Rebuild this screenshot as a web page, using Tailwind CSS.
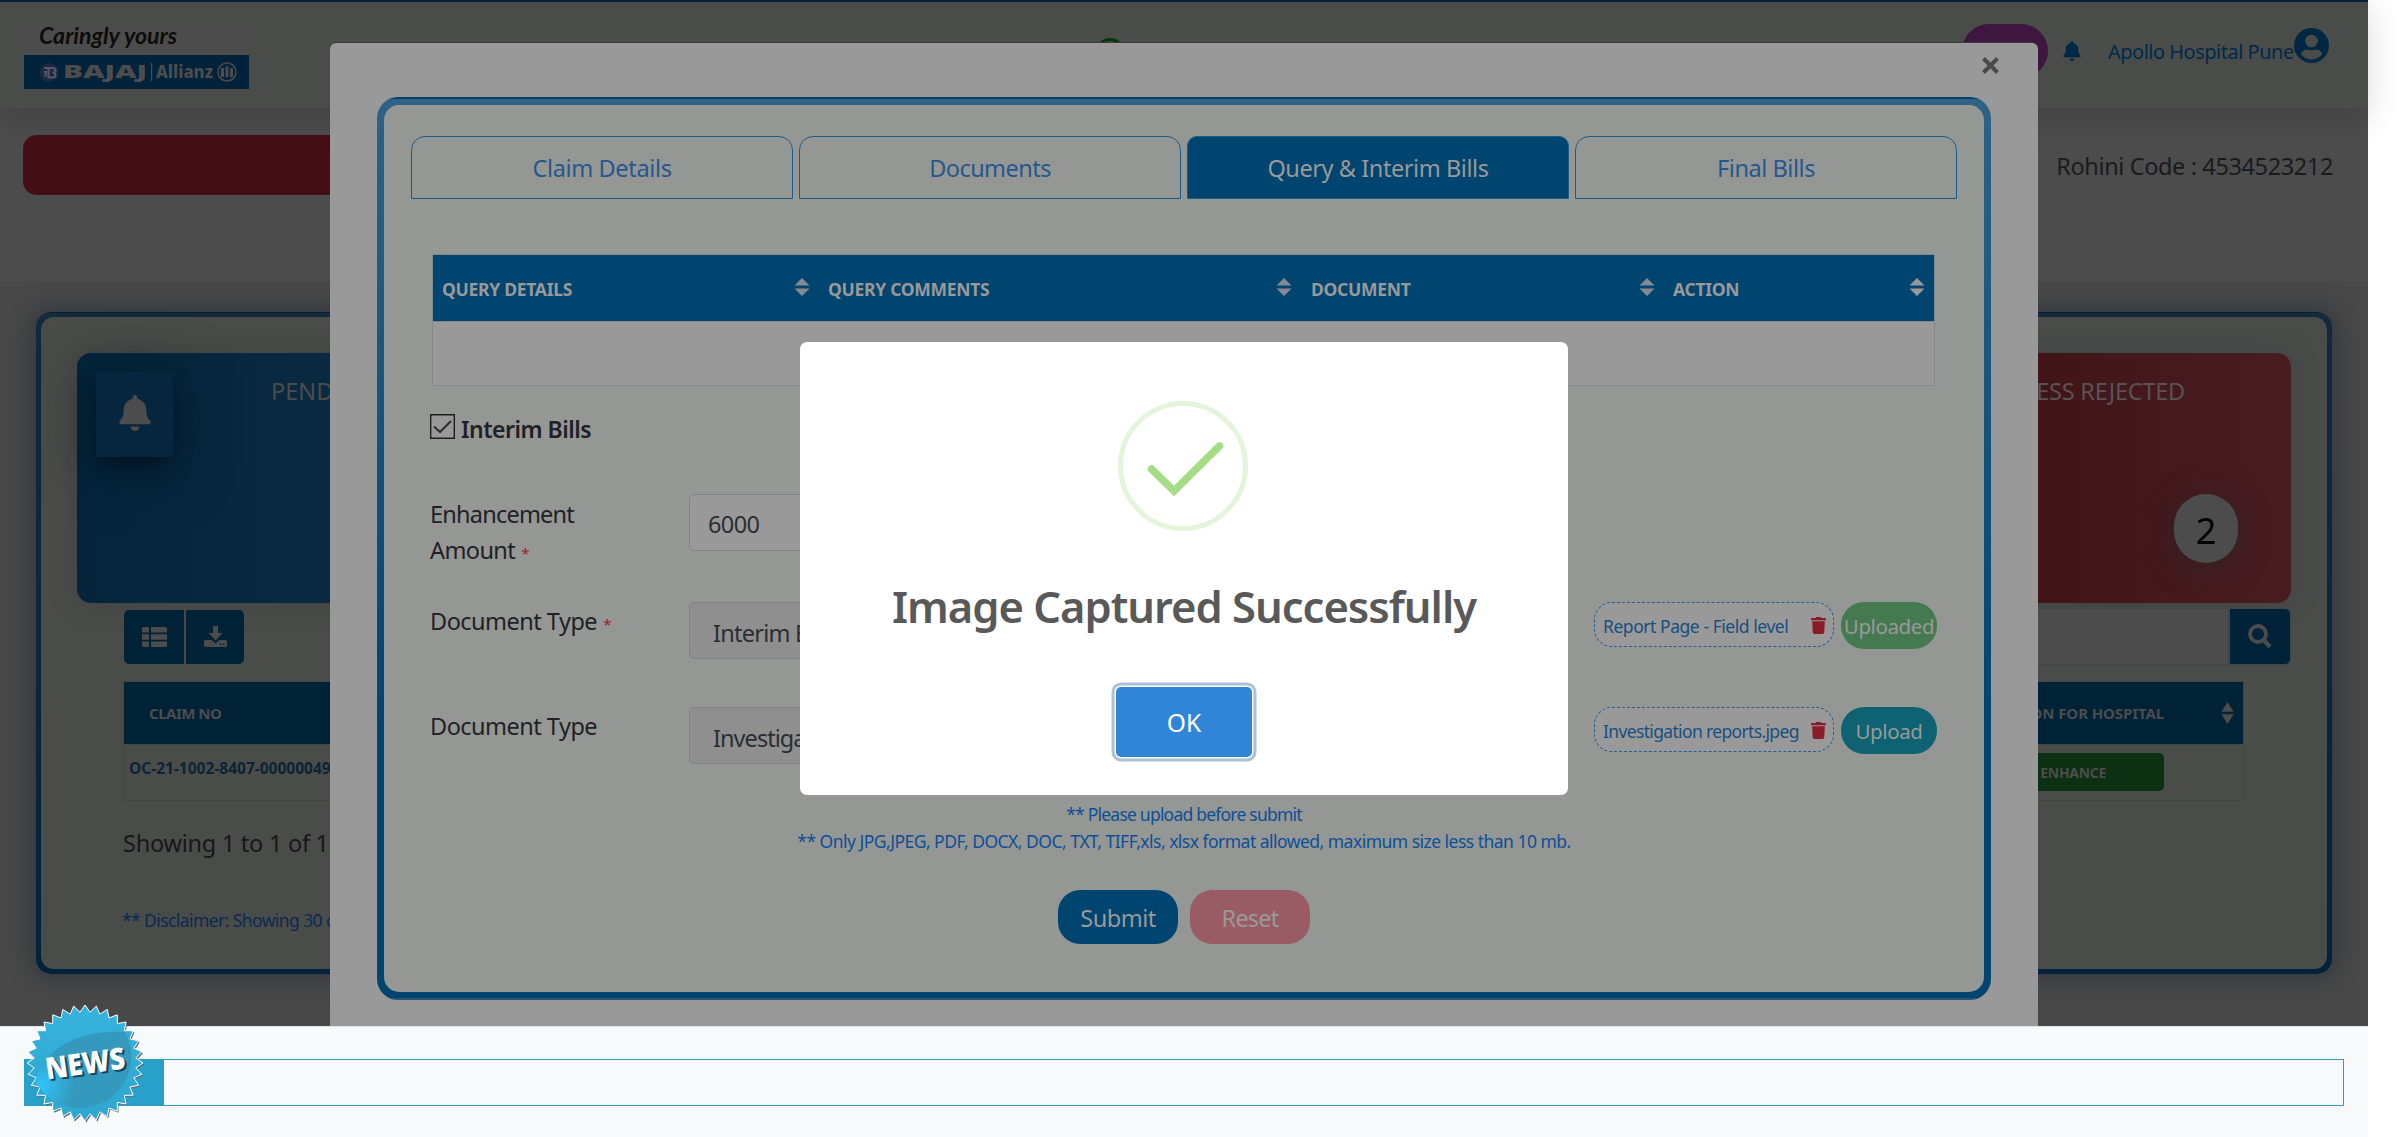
<!DOCTYPE html>
<html lang="en">
<head>
<meta charset="utf-8">
<title>Hospital Claims</title>
<script src="https://cdn.jsdelivr.net/npm/@tailwindcss/browser@4"></script>
</head>
<body class="relative h-[1137px] w-[2400px] overflow-hidden bg-white font-['Noto_Sans','Open_Sans',sans-serif] text-[23.5px] leading-[36px] whitespace-nowrap">

<svg class="hidden">
  <symbol id="bell" viewBox="0 0 448 512"><path d="M224 512c35.32 0 63.97-28.65 63.97-64H160.03c0 35.35 28.65 64 63.97 64zm215.39-149.71c-19.32-20.76-55.47-51.99-55.47-154.29 0-77.7-54.48-139.9-127.94-155.16V32c0-17.67-14.32-32-31.98-32s-31.98 14.33-31.98 32v20.84C118.56 68.1 64.08 130.3 64.08 208c0 102.3-36.15 133.53-55.47 154.29-6 6.45-8.66 14.16-8.61 21.71.11 16.4 12.98 32 32.1 32h383.8c19.12 0 32-15.6 32.1-32 .05-7.55-2.61-15.27-8.61-21.71z"/></symbol>
  <symbol id="trash" viewBox="0 0 448 512"><path d="M432 32H312l-9.4-18.7A24 24 0 0 0 281.100 0H166.800a23.720 23.720 0 0 0-21.400 13.300L136 32H16A16 16 0 0 0 0 48v32a16 16 0 0 0 16 16h416a16 16 0 0 0 16-16V48a16 16 0 0 0-16-16zM32 128L53.200 467a48 48 0 0 0 47.900 45h245.800a48 48 0 0 0 47.900-45L416 128z"/></symbol>
  <symbol id="sort" viewBox="0 0 16 18"><path d="M8 0L15.500 7.500H.5zM8 18L15.500 10.500H.5z"/></symbol>
</svg>

<header class="relative z-10 flex h-[108px] w-[2368px] items-start border-t-2 border-[#00233b] bg-[#4a4c4a] shadow-[0_8px_32px_rgba(0,0,0,0.15)]">
  <svg class="mt-5 ml-6 h-[67px] w-[225px] shrink-0" viewBox="0 0 225 67">
    <rect width="225" height="34" fill="#4c4c4c"/>
    <text x="15" y="22" font-family="Lato" font-style="italic" font-weight="700" font-size="22" fill="#0c0c0c" textLength="138" lengthAdjust="spacingAndGlyphs">Caringly yours</text>
    <rect y="33" width="225" height="34" fill="#00233b"/>
    <circle cx="25" cy="50.500" r="9.500" fill="#1c2748"/>
    <path d="M20 46h8.500q3 0 3 2.500t-3 2q3 0 3 2.500t-3 2.500h-4v-9M20 50h3M21.500 50v5" fill="none" stroke="#565a60" stroke-width="2"/>
    <text x="39" y="56" font-family="Open Sans" font-weight="800" font-size="17" fill="#4c4c4c" textLength="84" lengthAdjust="spacingAndGlyphs">BAJAJ</text>
    <rect x="127" y="41" width="1.200" height="18" fill="#4c4c4c"/>
    <text x="132" y="56" font-family="Noto Sans" font-weight="800" font-size="18" fill="#4c4c4c" textLength="57" lengthAdjust="spacingAndGlyphs">Allianz</text>
    <circle cx="203" cy="50" r="9" fill="none" stroke="#4c4c4c" stroke-width="1.500"/>
    <path d="M198.500 46v9M203 44.500v10.500M207.500 46v9" stroke="#4c4c4c" stroke-width="3"/>
  </svg>
  <svg class="mt-[36px] ml-[847px] size-7 shrink-0" viewBox="0 0 28 28"><circle cx="14" cy="14" r="12.500" fill="none" stroke="#003600" stroke-width="3"/></svg>
  <div class="mt-[22px] ml-[838px] h-[54px] w-[86px] shrink-0 rounded-[27px] bg-[#3e1640]"></div>
  <svg class="mt-[39px] ml-[15px] h-5 w-[18px] shrink-0 fill-[#002844]"><use href="#bell"/></svg>
  <span class="mt-[32px] ml-[27px] w-[186px] text-[20px] tracking-[-0.5px] text-[#002a4a]">Apollo Hospital Pune</span>
  <svg class="mt-[26px] size-[35px] shrink-0" viewBox="0 0 35 35"><circle cx="17.500" cy="17.500" r="17.500" fill="#002844"/><circle cx="17.500" cy="13" r="6.300" fill="#4a4c4a"/><path d="M6.700 26q2-4.500 6.200-4.500q4.600 1.600 9.200 0q4.200 0 6.200 4.500a13.500 13.500 0 0 1-21.600 0z" fill="#4a4c4a"/></svg>
</header>

<section class="flex h-[174px] w-[2368px] justify-between bg-[#4c4c4c] pt-[27px] pr-[35px] pl-[23px]">
  <div class="h-[60px] w-[1900px] rounded-[14px] bg-[#430f14]"></div>
  <div class="mt-[13px] tracking-[-0.38px] text-[#191b20]">Rohini Code : 4534523212</div>
</section>

<section class="h-[744px] w-[2368px] bg-[#484848] px-9 pt-[30px]">
  <div class="h-[662px] rounded-[15px] bg-[linear-gradient(to_bottom,#00233b_1px,#14293a_1px,#00233b)] p-[5px] shadow-[0_0_22px_4px_rgba(45,50,62,0.75)]">
    <div class="h-full rounded-[13px] bg-[#4a4c4a] px-9 pt-9">
      <div class="flex h-[250px] justify-between">
        <div class="flex w-[600px] rounded-[14px] bg-[linear-gradient(to_right,#03243b,#0a2b41_300px)] pt-[19px] pl-[19px] shadow-[0_0_24px_rgba(60,60,60,0.6)]">
          <div class="flex h-[85px] w-[77px] items-center justify-center bg-[#05263e] shadow-[0_12px_22px_-6px_rgba(0,10,20,0.7),0_6px_60px_rgba(0,20,30,0.5)]"><svg class="-mt-1 h-9 w-8 fill-[#4c4c4c]"><use href="#bell"/></svg></div>
          <div class="mt-px ml-[98px] text-[#4c4c4c]">PENDING CLAIMS</div>
        </div>
        <div class="flex w-[600px] flex-col items-end rounded-[14px] bg-[linear-gradient(to_right,#411518_350px,#481d22)] pt-[20px] pr-[53px] shadow-[0_0_24px_rgba(60,64,66,0.8)]">
          <div class="pr-[53px] tracking-[-0.25px] text-[#595353]">CASHLESS REJECTED</div>
          <div class="mt-[85px] flex h-[69px] w-[64px] items-center justify-center rounded-[34px] bg-[#4c4c4c] pt-1 text-[36px] text-black shadow-[0_4px_30px_rgba(45,35,38,0.9)]">2</div>
        </div>
      </div>
      <div class="mt-[5px] flex justify-between">
        <div class="mt-[2px] ml-[47px] flex gap-[2px]">
          <div class="flex h-[54px] w-[60px] items-center justify-center rounded-l-[5px] bg-[#002237]"><svg class="h-5 w-[25px] fill-[#4c4c4c]" viewBox="0 0 25 20"><path d="M1 0h6v5.500H0V1zM9 0h15l1 1v4.500H9zM0 7.200h7v5.500H0zM9 7.200h16v5.500H9zM0 14.400h7V20H1l-1-1zM9 14.400h16V19l-1 1H9z"/></svg></div>
          <div class="flex h-[54px] w-[58px] items-center justify-center rounded-r-[5px] bg-[#002237]"><svg class="-mt-0.5 h-[21px] w-[23px] fill-[#4c4c4c]" viewBox="0 0 23 21"><path d="M9 0h5v7h4.500l-7 7.500L4.500 7H9zM1 14h6.500l4 3.500 4-3.500H22l1 1v5l-1 1H1l-1-1v-5z"/><path d="M16 17.500h1.500V19H16zM19 17.500h1.500V19H19z" fill="#002237"/></svg></div>
        </div>
        <div class="flex h-[57px] w-[500px] rounded-[5px] border border-[#42464a] bg-[#4c4c4c]">
          <div class="grow border-r-2 border-[#42464a]"></div>
          <div class="flex w-[60px] items-center justify-center rounded-r-[5px] bg-[#002339]"><svg class="h-[25px] w-6" viewBox="0 0 24 25"><circle cx="10" cy="10" r="8" fill="none" stroke="#4c4c4c" stroke-width="3.800"/><path d="M15.500 16l6.500 6.800" stroke="#4c4c4c" stroke-width="4.500"/></svg></div>
        </div>
      </div>
      <div class="mt-[16px] ml-[46px] h-[120px] w-[2121px] border border-[#434545] text-[15px] font-bold text-[#4c4c4c]">
        <div class="flex h-[62px] items-center justify-between bg-[#002237] pr-[9px] pl-[25px]">
          <span class="tracking-[-0.5px]">CLAIM NO</span>
          <div class="flex items-center gap-[57px]"><div class="tracking-[-0.1px]">ACTION FOR HOSPITAL</div><svg class="h-[22px] w-[13px] fill-[#4c4c4c]" preserveAspectRatio="none" viewBox="0 0 16 18"><path d="M8 0L15.500 8H.5zM8 18L15.500 10H.5z"/></svg></div>
        </div>
        <div class="flex justify-between border-t border-[#434545] pt-[8px] pr-[79px] pl-[5px]">
          <div class="-mt-[3px] text-[15.5px] text-[#0a2436]">OC-21-1002-8407-00000049</div>
          <div class="h-[38px] w-[200px] rounded-[5px] bg-[#0b3012] pr-[58px] text-right text-[14px] leading-[39px] tracking-[-0.3px]">ENHANCE</div>
        </div>
      </div>
      <div class="mt-[24px] ml-[46px] tracking-[-0.25px] text-[#171717]">Showing 1 to 1 of 1</div>
      <div class="mt-[41px] ml-[45px] text-[17.5px] tracking-[-0.58px] text-[#0a2a52]">** Disclaimer: Showing 30 claims</div>
    </div>
  </div>
</section>

<footer class="h-[111px] w-[2368px] border-t border-[#dfe3e8] bg-[#f8f9fb] px-6 pt-8">
  <div class="h-[47px] border border-[#2ba0bf]"><div class="h-full w-[139px] bg-[#27a0ca]"></div></div>
</footer>
<svg class="absolute top-[1002px] left-[24px] h-[122px] w-[122px] overflow-visible" viewBox="-61 -61 122 122">
  <defs>
    <linearGradient id="seal" x1="0" y1="0" x2="0" y2="1"><stop offset="0" stop-color="#36b3dd"/><stop offset="1" stop-color="#2ea6cf"/></linearGradient>
    <radialGradient id="glow" gradientUnits="userSpaceOnUse" cx="-44" cy="22" r="34"><stop offset="0" stop-color="#2fc4fa"/><stop offset="1" stop-color="#3499bc"/></radialGradient>
  </defs>
  <polygon class="star" fill="#5d6b72" transform="translate(1.200 1.500)"/>
  <polygon class="star" fill="url(#seal)" stroke="#fff" stroke-width="1"/>
  <path d="M-50 18C-38-22 5-33 40-31A50.500 50.500 0 1 1-50 18z" fill="url(#glow)"/>
  <text transform="rotate(-8)" x="-38" y="13" font-family="Open Sans" font-weight="800" font-size="30" fill="#14465a" textLength="80" lengthAdjust="spacingAndGlyphs" aria-hidden="true">NEWS</text>
  <text transform="rotate(-8)" x="-40" y="11" font-family="Open Sans" font-weight="800" font-size="30" fill="#fff" textLength="80" lengthAdjust="spacingAndGlyphs">NEWS</text>
</svg>
<script>
  // scalloped edge of the news seal
  const pts = [];
  for (let i = 0; i < 64; i++) {
    const r = i % 2 ? 51 : 58, a = (i * Math.PI) / 32 - Math.PI / 2;
    pts.push((r * Math.cos(a)).toFixed(2) + ',' + (r * Math.sin(a)).toFixed(2));
  }
  document.querySelectorAll('.star').forEach(s => s.setAttribute('points', pts.join(' ')));
</script>

<div class="absolute top-[43px] left-[330px] z-20 h-[983px] w-[1708px] rounded-t-[6px] bg-[#999] px-[47px] pt-[54px] text-[#1f2126] shadow-[0_-1px_0_0_#3c3c3c]">
  <svg class="absolute top-[14px] right-[39px] size-[17px]" viewBox="0 0 17 17"><path d="M1.500 1.500l14 14M15.500 1.500l-14 14" stroke="#4a4a4a" stroke-width="4"/></svg>
  <div class="h-[903px] rounded-[21px] bg-[linear-gradient(to_bottom,#00416c_2px,#2e6286_2px,#004470_70%,#004470_901px,#2c5674_901px)] px-[7px] py-[8px]">
    <div class="h-full rounded-[15px] bg-[#959795] px-[27px] pt-[31px]">
      <nav class="grid grid-cols-4 gap-[6px] text-center text-[#24588e]">
        <div class="h-[63px] rounded-t-[14px] border border-[#1f5a86] pt-[13px] tracking-[-0.35px]">Claim Details</div>
        <div class="h-[63px] rounded-t-[14px] border border-[#1f5a86] pt-[13px] tracking-[-0.55px]">Documents</div>
        <div class="h-[63px] rounded-t-[10px] border border-[#1f5a86] bg-[#00456f] pt-[13px] tracking-[-0.42px] text-[#999]">Query &amp; Interim Bills</div>
        <div class="h-[63px] rounded-t-[14px] border border-[#1f5a86] pt-[13px] tracking-[-0.45px]">Final Bills</div>
      </nav>

      <div class="mt-[55px] ml-[21px] h-[132px] w-[1503px] border border-[#84878b] bg-[#999]">
        <div class="grid h-[67px] grid-cols-[386px_483px_362px_1fr] items-center border-b border-[#84878b] bg-[#004570] pt-[2px] text-[17.5px] font-bold tracking-[-0.28px] text-[#999]">
          <div class="flex justify-between pr-[9px] pl-[9px]"><span>QUERY DETAILS</span><svg class="mt-[7px] h-[18px] w-4 fill-[#858a92]"><use href="#sort"/></svg></div>
          <div class="flex justify-between pr-[10px] pl-[9px]"><span>QUERY COMMENTS</span><svg class="mt-[7px] h-[18px] w-4 fill-[#858a92]"><use href="#sort"/></svg></div>
          <div class="flex justify-between pr-[9px] pl-[9px]"><span>DOCUMENT</span><svg class="mt-[7px] h-[18px] w-4 fill-[#858a92]"><use href="#sort"/></svg></div>
          <div class="flex justify-between pr-[9px] pl-[9px]"><span>ACTION</span><svg class="mt-[7px] h-[18px] w-4 fill-[#999]"><use href="#sort"/></svg></div>
        </div>
      </div>

      <div class="mt-[27px] ml-[19px] flex gap-[6px]">
        <svg class="mt-px size-[25px]" viewBox="0 0 25 25"><path d="M.7.7h23.600v23.600H.7z" fill="#999" stroke="#1c1e1c" stroke-width="1.400"/><path d="M4 12.500l6 5.500L21 7" fill="none" stroke="#2c2e2c" stroke-width="2"/></svg>
        <span class="-mt-[2px] mb-px text-[23px] font-semibold tracking-[-0.5px]">Interim Bills</span>
      </div>

      <div class="mt-[46px] ml-[19px] flex h-[108px]">
        <div class="w-[259px] pt-[2px]"><span class="tracking-[-0.78px]">Enhancement</span><br><span class="tracking-[-0.6px]">Amount</span> <span class="text-[15px] text-[#a01c2c]">*</span></div>
        <div class="h-[57px] w-[400px] rounded-[5px] border border-[#7f8387] bg-[#999] pt-[11px] pl-[18px] tracking-[-0.6px] text-[#2a2e33]">6000</div>
      </div>
      <div class="ml-[19px] flex h-[105px]">
        <div class="w-[259px] pt-px"><span class="tracking-[-0.52px]">Document Type</span> <span class="text-[15px] text-[#a01c2c]">*</span></div>
        <div class="h-[57px] w-[400px] rounded-[5px] border border-[#7f8387] bg-[#908f8f] pt-[12px] pl-[23px] tracking-[-0.75px] text-[#2a2e33]">Interim Bills</div>
        <div class="ml-[505px] flex h-[45px] w-[240px] items-center justify-between rounded-[18px] border border-dashed border-[#205f92] bg-[#999] pr-[7px] pl-[8px] text-[17.5px] tracking-[-0.45px] text-[#174f82]"><span class="pt-[2px]">Report Page - Field level</span><svg class="mt-[2px] h-[17px] w-[15px] fill-[#8a1c29]"><use href="#trash"/></svg></div>
        <div class="ml-[7px] h-[47px] w-[96px] rounded-[23px] bg-[#457a50] pt-[6px] text-center text-[20.5px] tracking-[-0.4px] text-[#999]">Uploaded</div>
      </div>
      <div class="ml-[19px] flex h-[96px]">
        <div class="w-[259px] pt-px"><span class="tracking-[-0.52px]">Document Type</span></div>
        <div class="h-[57px] w-[400px] rounded-[5px] border border-[#7f8387] bg-[#908f8f] pt-[12px] pl-[23px] tracking-[-0.95px] text-[#2a2e33]">Investigation reports</div>
        <div class="ml-[505px] flex h-[45px] w-[240px] items-center justify-between rounded-[18px] border border-dashed border-[#205f92] bg-[#999] pr-[7px] pl-[8px] text-[17.5px] tracking-[-0.65px] text-[#174f82]"><span class="pt-[2px]">Investigation reports.jpeg</span><svg class="mt-[2px] h-[17px] w-[15px] fill-[#8a1c29]"><use href="#trash"/></svg></div>
        <div class="ml-[7px] h-[47px] w-[96px] rounded-[23px] bg-[#0e6271] pt-[6px] text-center text-[20.5px] tracking-[-0.4px] text-[#999]">Upload</div>
      </div>

      <div class="-mx-[27px] -mt-[2px] text-center text-[17.5px] leading-[27px] text-[#0d4f96]">
        <div class="tracking-[-0.78px]">** Please upload before submit</div>
        <div class="tracking-[-0.52px]">** Only JPG,JPEG, PDF, DOCX, DOC, TXT, TIFF,xls, xlsx format allowed, maximum size less than 10 mb.</div>
      </div>
      <div class="mt-[35px] flex justify-center gap-3 text-center text-[#999]">
        <div class="h-[54px] w-[120px] rounded-[22px] bg-[#00456f] pt-[10px] tracking-[-0.5px]">Submit</div>
        <div class="h-[54px] w-[120px] rounded-[22px] bg-[#9a5c64] pt-[10px] tracking-[-0.8px]">Reset</div>
      </div>
    </div>
  </div>
</div>

<div class="absolute top-[342px] left-[800px] z-30 flex h-[453px] w-[768px] flex-col items-center rounded-[7px] bg-white pt-[59px]">
  <svg class="mr-[2px] h-[130px] w-[130px]" viewBox="0 0 130 130"><circle cx="65" cy="65" r="62.500" fill="none" stroke="#e4f5db" stroke-width="5"/><path d="M33.500 68L56 90L101.500 45" fill="none" stroke="#a5dc86" stroke-width="7.500" stroke-linecap="round"/></svg>
  <h2 class="mt-[45px] text-[43.5px] leading-[60px] font-semibold tracking-[-1px] text-[#595959]">Image Captured Successfully</h2>
  <button class="mt-[51px] h-[70px] w-[136px] rounded-[5px] bg-[#3085d6] pt-[2px] text-[24.5px] text-white shadow-[0_0_0_1.5px_#fff,0_0_0_4.5px_#adc1d5]">OK</button>
</div>
</body>
</html>
